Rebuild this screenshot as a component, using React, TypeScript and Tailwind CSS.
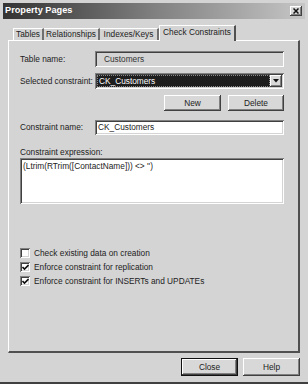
import React from "react";

const sunken =
  "shadow-[inset_1px_1px_0_#808080,inset_-1px_-1px_0_#ffffff,inset_2px_2px_0_#404040,inset_-2px_-2px_0_#d4d4d4]";
const raised =
  "shadow-[inset_-1px_-1px_0_#404040,inset_1px_1px_0_#ffffff,inset_-2px_-2px_0_#808080]";

function Btn({ label, w, def }: { label: string; w: string; def?: boolean }) {
  return (
    <div
      className={`${w} h-full flex items-center justify-center bg-[#d8d8d8] text-[#222] ${
        def ? "border border-[#111] " : ""
      }${raised}`}
    >
      {label}
    </div>
  );
}

function Check({ checked, label }: { checked: boolean; label: string }) {
  return (
    <div className="h-[14px] flex items-center">
      <div className={`w-[10px] h-[10px] bg-white ${sunken} flex items-center justify-center`}>
        {checked && (
          <svg width="7" height="7" viewBox="0 0 7 7">
            <path d="M0.5 3 L2.5 5 L6.5 1" stroke="#111" strokeWidth="1.6" fill="none" />
          </svg>
        )}
      </div>
      <span className="ml-[4px] text-[#222]">{label}</span>
    </div>
  );
}

export default function App() {
  return (
    <div
      className="w-[308px] h-[384px] bg-[#d4d4d4] flex flex-col overflow-hidden border-b-[2px] border-[#404040] text-[8.3px] leading-none"
      style={{ fontFamily: '"Liberation Sans", Arial, sans-serif' }}
    >
      {/* title bar */}
      <div className="mx-[3px] mt-[3px] h-[16px] shrink-0 flex items-center justify-between bg-linear-to-r from-[#343434] via-[#808080] to-[#c6c6c6] pl-[2px] pr-[3px]">
        <span className="text-white font-bold text-[9.2px]">Property Pages</span>
        <div className={`w-[12px] h-[10px] bg-[#d8d8d8] ${raised} flex items-center justify-center`}>
          <svg width="6" height="6" viewBox="0 0 6 6">
            <path d="M0.5 0.5 L5.5 5.5 M5.5 0.5 L0.5 5.5" stroke="#111" strokeWidth="1.5" />
          </svg>
        </div>
      </div>

      <div className="px-[8px] mt-[6px] flex flex-col">
        {/* tabs */}
        <div className="h-[15px] flex items-end pl-[5px] relative z-10">
          <div className="h-[12px] w-[31px] flex items-center justify-center border-l border-t border-white border-r-2 border-r-[#707070] text-[#222]">
            Tables
          </div>
          <div className="h-[12px] w-[56px] flex items-center justify-center border-t border-white border-r-2 border-r-[#707070] text-[#222]">
            Relationships
          </div>
          <div className="h-[12px] w-[59px] flex items-center justify-center border-t border-white border-r-2 border-r-[#707070] text-[#222]">
            Indexes/Keys
          </div>
          <div className="h-[16px] -mb-[1px] w-[77px] bg-[#d4d4d4] flex items-center justify-center border-l border-t border-white border-r-2 border-r-[#505050] text-[#222] pb-[2px]">
            Check Constraints
          </div>
        </div>

        {/* panel */}
        <div
          className={`h-[313px] flex flex-col pl-[11px] pr-[14px] pt-[10px] border-t border-l border-white border-r-2 border-b-2 border-r-[#505050] border-b-[#505050]`}
        >
          <div className="h-[16px] flex items-center">
            <span className="w-[75px] text-[#222]">Table name:</span>
            <div className={`flex-1 h-full flex items-center pl-[9px] ${sunken} text-[#333]`}>Customers</div>
          </div>
          <div className="h-[16px] mt-[6px] flex items-center">
            <span className="w-[75px] text-[#222]">Selected constraint:</span>
            <div className={`flex-1 h-full flex items-center ${sunken} p-[2px]`}>
              <div className="flex-1 h-full bg-[#1e1e1e] flex items-center pl-[1px] text-white border border-dotted border-[#888]">
                CK_Customers
              </div>
              <div className={`w-[12px] h-full bg-[#d8d8d8] ${raised} flex items-center justify-center`}>
                <svg width="6" height="4" viewBox="0 0 6 4">
                  <path d="M0 0 H6 L3 3.5 Z" fill="#111" />
                </svg>
              </div>
            </div>
          </div>
          <div className="h-[16px] mt-[6px] flex justify-end gap-[7px]">
            <Btn label="New" w="w-[57px]" />
            <Btn label="Delete" w="w-[56px]" />
          </div>
          <div className="h-[15px] mt-[9px] flex items-center">
            <span className="w-[75px] text-[#222]">Constraint name:</span>
            <div className={`flex-1 h-full flex items-center pl-[3px] bg-white ${sunken} text-[#222]`}>
              CK_Customers
            </div>
          </div>
          <div className="mt-[13px] h-[10px] text-[#222]">Constraint expression:</div>
          <div className={`h-[46px] bg-white ${sunken} pl-[3px] pt-[4px] text-[#222]`}>
            (Ltrim(RTrim([ContactName])) &lt;&gt; '')
          </div>
          <div className="mt-[42px] flex flex-col">
            <Check checked={false} label="Check existing data on creation" />
            <Check checked={true} label="Enforce constraint for replication" />
            <Check checked={true} label="Enforce constraint for INSERTs and UPDATEs" />
          </div>
        </div>

        {/* bottom buttons */}
        <div className="h-[18px] mt-[5px] flex justify-end gap-[5px]">
          <Btn label="Close" w="w-[57px]" def />
          <Btn label="Help" w="w-[57px]" />
        </div>
      </div>
    </div>
  );
}
